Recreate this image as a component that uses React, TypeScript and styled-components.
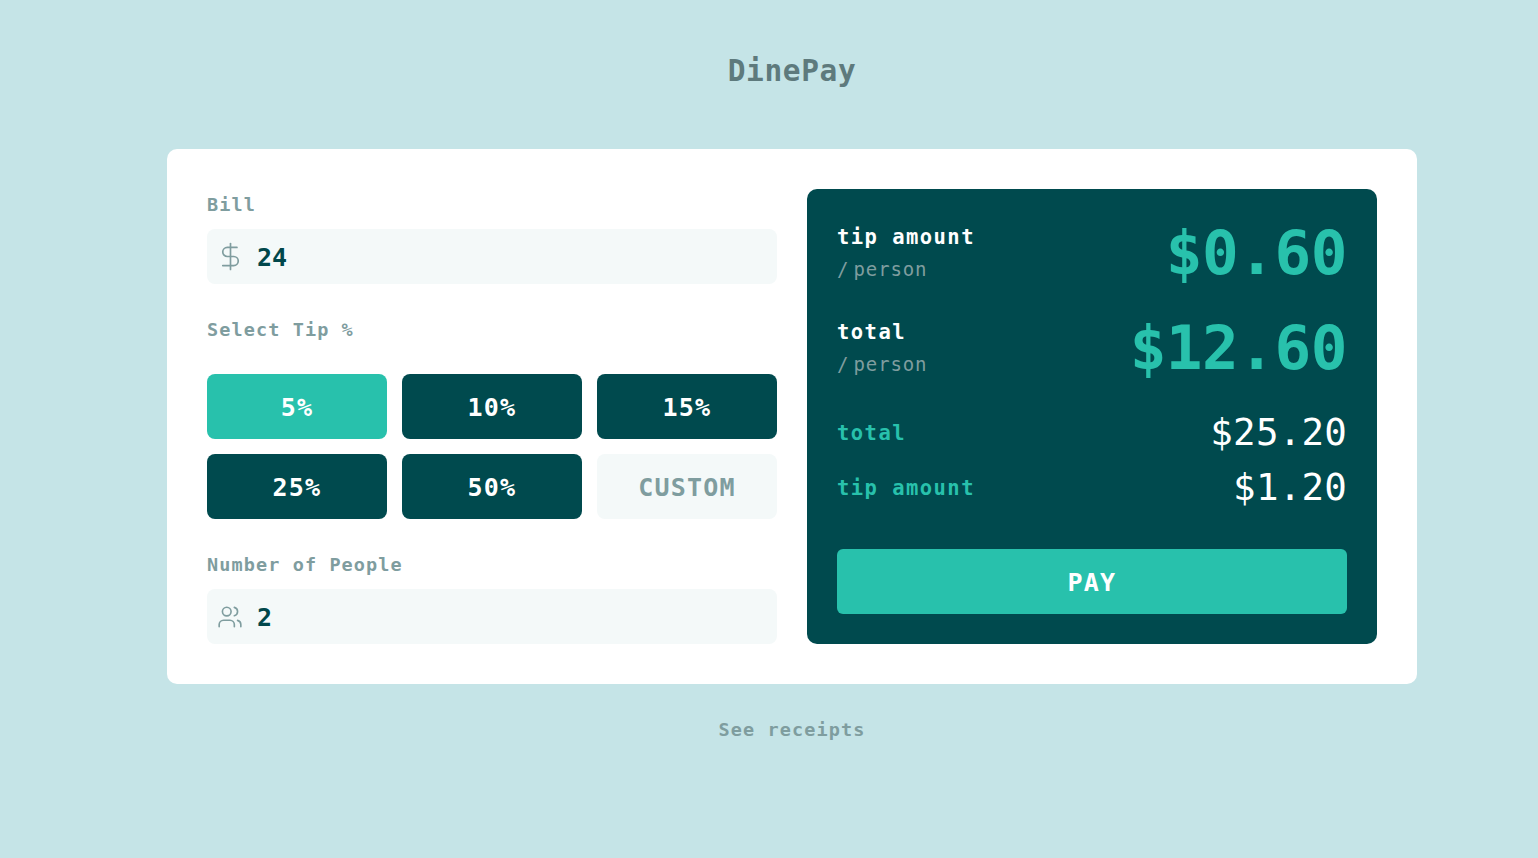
import React from "react";
import styled, { createGlobalStyle } from "styled-components";
import { DollarSign, Users } from "lucide-react";

const MONO = `"DejaVu Sans Mono", "Liberation Mono", monospace`;

const Global = createGlobalStyle`
  html, body { margin: 0; padding: 0; }
  body { background: #c5e4e7; font-family: ${MONO}; }
`;

const Page = styled.div`
  width: 1538px;
  height: 858px;
  overflow: hidden;
  padding: 48px 121px 0 167px;
  box-sizing: border-box;
  display: flex;
  flex-direction: column;
  align-items: center;
`;

const Title = styled.h1`
  margin: 0 0 57px;
  height: 44px;
  font-size: 29.5px;
  line-height: 46px;
  font-weight: 700;
  letter-spacing: 0.6px;
  color: #5e7a7d;
`;

const Card = styled.main`
  width: 1250px;
  height: 535px;
  box-sizing: border-box;
  padding: 40px;
  background: #fff;
  border-radius: 10px;
  display: grid;
  grid-template-columns: 570px 570px;
  gap: 30px;
`;

const Form = styled.section`
  display: flex;
  flex-direction: column;
`;

const Label = styled.div<{ $gap: number; $top?: number }>`
  height: 30px;
  line-height: 32px;
  font-size: 18.5px;
  font-weight: 700;
  letter-spacing: 1.1px;
  color: #7f9d9f;
  margin-top: ${(p) => p.$top ?? 0}px;
  margin-bottom: ${(p) => p.$gap}px;
`;

const InputBox = styled.div`
  height: 55px;
  border-radius: 8px;
  background: #f4f9f9;
  display: flex;
  align-items: center;
  color: #7f9d9f;
`;

const IconSlot = styled.span`
  width: 46px;
  margin-right: 4px;
  display: flex;
  justify-content: center;
  align-items: center;
  flex: none;
`;

const InputValue = styled.span`
  padding-top: 2px;
  font-size: 25px;
  font-weight: 700;
  color: #00474b;
`;

const TipGrid = styled.div`
  display: grid;
  grid-template-columns: repeat(3, 180px);
  grid-auto-rows: 65px;
  gap: 15px;
`;

const TipButton = styled.button<{ $active?: boolean; $custom?: boolean }>`
  border: 0;
  padding: 2px 0 0;
  border-radius: 8px;
  font-family: ${MONO};
  font-size: 25px;
  font-weight: 700;
  letter-spacing: 1.2px;
  background: ${(p) => (p.$active ? "#28c1ac" : p.$custom ? "#f4f9f9" : "#004a4e")};
  color: ${(p) => (p.$custom ? "#7f9d9f" : "#fff")};
`;

const Summary = styled.section`
  background: #004a4e;
  border-radius: 10px;
  padding: 30px;
  display: flex;
  flex-direction: column;
`;

const PerPerson = styled.div`
  height: 65px;
  margin-bottom: 30px;
  display: flex;
  justify-content: space-between;
  align-items: center;
`;

const RowLabel = styled.div`
  display: flex;
  flex-direction: column;
  padding-top: 3px;
`;

const Name = styled.span<{ $accent?: boolean }>`
  font-size: 20.5px;
  line-height: 32px;
  font-weight: 700;
  letter-spacing: 1.45px;
  color: ${(p) => (p.$accent ? "#28c1ac" : "#fff")};
`;

const Sub = styled.span`
  font-size: 19px;
  line-height: 32px;
  letter-spacing: 0.85px;
  word-spacing: -8px;
  color: #7f9d9f;
`;

const BigValue = styled.span`
  padding-top: 2px;
  font-size: 61px;
  line-height: 65px;
  font-weight: 700;
  letter-spacing: -0.5px;
  color: #28c1ac;
`;

const TotalRow = styled.div`
  height: 55px;
  display: flex;
  justify-content: space-between;
  align-items: center;
  padding-top: 2px;
  box-sizing: border-box;
`;

const SmallValue = styled.span`
  font-size: 37.5px;
  line-height: 55px;
  letter-spacing: 0.2px;
  color: #fff;
`;

const Totals = styled.div`
  margin-top: -5px;
  display: flex;
  flex-direction: column;
`;

const PayButton = styled.button`
  margin-top: auto;
  height: 65px;
  border: 0;
  padding: 2px 0 0;
  border-radius: 6px;
  background: #28c1ac;
  color: #fff;
  font-family: ${MONO};
  font-size: 25px;
  font-weight: 700;
  letter-spacing: 1.2px;
`;

const Receipts = styled.a`
  margin-top: 30px;
  line-height: 32px;
  font-size: 18.5px;
  font-weight: 700;
  letter-spacing: 1.1px;
  color: #7f9d9f;
`;

const tips = ["5%", "10%", "15%", "25%", "50%"];

export default function App() {
  return (
    <Page>
      <Global />
      <Title>DinePay</Title>
      <Card>
        <Form>
          <Label $gap={10}>Bill</Label>
          <InputBox>
            <IconSlot>
              <DollarSign size={31} strokeWidth={1.3} />
            </IconSlot>
            <InputValue>24</InputValue>
          </InputBox>
          <Label $top={30} $gap={30}>Select Tip %</Label>
          <TipGrid>
            {tips.map((t, i) => (
              <TipButton key={t} $active={i === 0}>{t}</TipButton>
            ))}
            <TipButton $custom>CUSTOM</TipButton>
          </TipGrid>
          <Label $top={30} $gap={10}>Number of People</Label>
          <InputBox>
            <IconSlot>
              <Users size={26} strokeWidth={1.5} />
            </IconSlot>
            <InputValue>2</InputValue>
          </InputBox>
        </Form>
        <Summary>
          <PerPerson>
            <RowLabel>
              <Name>tip amount</Name>
              <Sub>/ person</Sub>
            </RowLabel>
            <BigValue>$0.60</BigValue>
          </PerPerson>
          <PerPerson>
            <RowLabel>
              <Name>total</Name>
              <Sub>/ person</Sub>
            </RowLabel>
            <BigValue>$12.60</BigValue>
          </PerPerson>
          <Totals>
            <TotalRow>
              <Name $accent>total</Name>
              <SmallValue>$25.20</SmallValue>
            </TotalRow>
            <TotalRow>
              <Name $accent>tip amount</Name>
              <SmallValue>$1.20</SmallValue>
            </TotalRow>
          </Totals>
          <PayButton>PAY</PayButton>
        </Summary>
      </Card>
      <Receipts>See receipts</Receipts>
    </Page>
  );
}
